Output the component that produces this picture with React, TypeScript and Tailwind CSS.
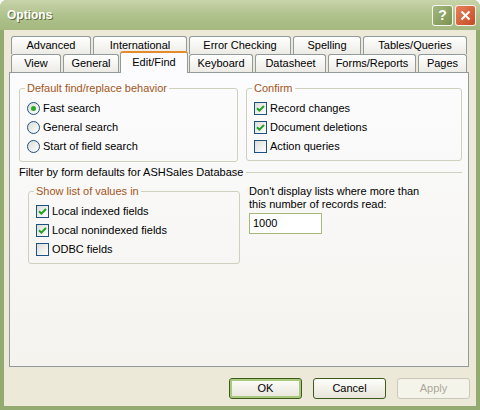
import React from 'react';

type TabDef = { label: string; w: string; active?: boolean };

const topTabs: TabDef[] = [
  { label: 'Advanced', w: 'w-[80px]' },
  { label: 'International', w: 'w-[94px]' },
  { label: 'Error Checking', w: 'w-[102px]' },
  { label: 'Spelling', w: 'w-[68px]' },
  { label: 'Tables/Queries', w: 'w-[104px]' },
];

const bottomTabs: TabDef[] = [
  { label: 'View', w: 'w-[50px]' },
  { label: 'General', w: 'w-[56px]' },
  { label: 'Edit/Find', w: 'w-[68px]', active: true },
  { label: 'Keyboard', w: 'w-[64px]' },
  { label: 'Datasheet', w: 'w-[71px]' },
  { label: 'Forms/Reports', w: 'w-[88px]' },
  { label: 'Pages', w: 'w-[49px]' },
];

function Tab({ label, w, active }: TabDef) {
  if (active) {
    return (
      <div className={`${w} relative z-10 -mx-px -mb-px h-[22px] pb-[2px] flex items-center justify-center rounded-t-[3px] border-x border-t-2 border-x-[#919b9c] border-t-[#e68b2c] bg-[#fcfcfe]`}>
        {label}
      </div>
    );
  }
  return (
    <div className={`${w} h-[18px] flex items-center justify-center rounded-t-[3px] border border-b-0 border-[#919b9c] bg-linear-to-b from-white to-[#ecebe5]`}>
      {label}
    </div>
  );
}

function CheckBox({ checked }: { checked?: boolean }) {
  return (
    <span className="w-[13px] h-[13px] shrink-0 border border-[#1c5180] bg-linear-to-br from-[#dcdcd7] to-white flex items-center justify-center">
      {checked && (
        <svg width="9" height="9" viewBox="0 0 9 9">
          <path d="M1 4.2 L3.4 6.6 L8 2" stroke="#21a121" strokeWidth="2" fill="none" />
        </svg>
      )}
    </span>
  );
}

function Radio({ checked }: { checked?: boolean }) {
  return (
    <span className="w-[13px] h-[13px] shrink-0 rounded-full border border-[#1c5180] bg-linear-to-br from-[#dcdcd7] to-white flex items-center justify-center">
      {checked && <span className="w-[5px] h-[5px] rounded-full bg-[#2aa92a]" />}
    </span>
  );
}

function Group({ title, className, children }: { title: string; className: string; children: React.ReactNode }) {
  return (
    <fieldset className={`border border-[#d0d0bf] rounded-[3px] px-[7px] ${className}`}>
      <legend className="-ml-[2px] px-[2px] leading-[14px] text-[#a3561a]">{title}</legend>
      <div className="mt-[4px] flex flex-col">{children}</div>
    </fieldset>
  );
}

function Row({ children }: { children: React.ReactNode }) {
  return <label className="h-[19px] flex items-center gap-[3px]">{children}</label>;
}

function Button({ label, primary, disabled }: { label: string; primary?: boolean; disabled?: boolean }) {
  if (disabled) {
    return (
      <div className="w-[73px] h-[21px] rounded-[3px] border border-[#cac8bb] bg-[#f5f4ea] text-[#aca899] flex items-center justify-center">
        {label}
      </div>
    );
  }
  return (
    <div
      className={`w-[73px] h-[21px] rounded-[3px] border border-[#3d5c1c] bg-linear-to-b from-[#fefefb] to-[#e7e5da] flex items-center justify-center ${
        primary ? 'shadow-[inset_0_0_0_2px_#a9c97c]' : ''
      }`}
    >
      {label}
    </div>
  );
}

export default function App() {
  return (
    <div className="w-[480px] h-[410px] flex flex-col bg-[#93aa70] rounded-t-[7px] font-['Liberation_Sans',Arial,sans-serif] text-[11px] text-black select-none">
      {/* title bar */}
      <div className="h-[30px] shrink-0 flex items-center pl-[7px] pr-[4px] rounded-t-[7px] bg-linear-to-b from-[#c8d4aa] via-[#b0c28d] to-[#a4b880]">
        <span className="flex-1 font-bold text-[12px] text-white [text-shadow:1px_1px_0_#5d6f3c]">Options</span>
        <div className="flex gap-[2px]">
          <div className="w-[21px] h-[21px] rounded-[3px] border border-white/90 bg-linear-to-br from-[#a4b77d] to-[#7b9350] flex items-center justify-center text-white font-bold text-[14px]">
            ?
          </div>
          <div className="w-[21px] h-[21px] rounded-[3px] border border-white/90 bg-linear-to-br from-[#e8805a] to-[#c44a22] flex items-center justify-center">
            <svg width="11" height="11" viewBox="0 0 11 11">
              <path d="M1.5 1.5 L9.5 9.5 M9.5 1.5 L1.5 9.5" stroke="white" strokeWidth="2" />
            </svg>
          </div>
        </div>
      </div>

      {/* dialog body */}
      <div className="flex-1 mx-[4px] mb-[4px] bg-[#ece9d8] pt-[6px] pl-[5px] flex flex-col">
        <div className="ml-[2px] flex gap-[2px]">
          {topTabs.map((t) => (
            <Tab key={t.label} {...t} />
          ))}
        </div>
        <div className="ml-[2px] h-[18px] flex items-end gap-[2px]">
          {bottomTabs.map((t) => (
            <Tab key={t.label} {...t} />
          ))}
        </div>

        <div className="w-[460px] h-[295px] border border-[#919b9c] bg-linear-to-b from-[#fcfcfe] to-[#f4f3ee] pt-[8px] pl-[9px]">
          <div className="w-[443px]">
            <div className="flex gap-[8px] items-start">
              <Group title="Default find/replace behavior" className="w-[219px] h-[81px]">
                <Row>
                  <Radio checked />
                  Fast search
                </Row>
                <Row>
                  <Radio />
                  General search
                </Row>
                <Row>
                  <Radio />
                  Start of field search
                </Row>
              </Group>
              <Group title="Confirm" className="w-[216px] h-[80px]">
                <Row>
                  <CheckBox checked />
                  Record changes
                </Row>
                <Row>
                  <CheckBox checked />
                  Document deletions
                </Row>
                <Row>
                  <CheckBox />
                  Action queries
                </Row>
              </Group>
            </div>

            <div className="mt-[3px] h-[14px] flex items-center">
              <span>Filter by form defaults for ASHSales Database</span>
              <div className="flex-1 ml-[3px] h-px bg-[#d0d0bf]" />
            </div>

            <div className="mt-[5px] flex items-start">
              <Group title="Show list of values in" className="ml-[9px] w-[212px] h-[80px]">
                <Row>
                  <CheckBox checked />
                  Local indexed fields
                </Row>
                <Row>
                  <CheckBox checked />
                  Local nonindexed fields
                </Row>
                <Row>
                  <CheckBox />
                  ODBC fields
                </Row>
              </Group>
              <div className="ml-[9px] mt-[1px] flex flex-col">
                <p className="leading-[13px]">
                  Don't display lists where more than
                  <br />
                  this number of records read:
                </p>
                <div className="mt-[2px] w-[73px] h-[21px] border border-[#a5b97b] bg-white pl-[3px] flex items-center">
                  1000
                </div>
              </div>
            </div>
          </div>
        </div>

        <div className="mt-[11px] pr-[6px] flex justify-end gap-[11px]">
          <Button label="OK" primary />
          <Button label="Cancel" />
          <Button label="Apply" disabled />
        </div>
      </div>
    </div>
  );
}
